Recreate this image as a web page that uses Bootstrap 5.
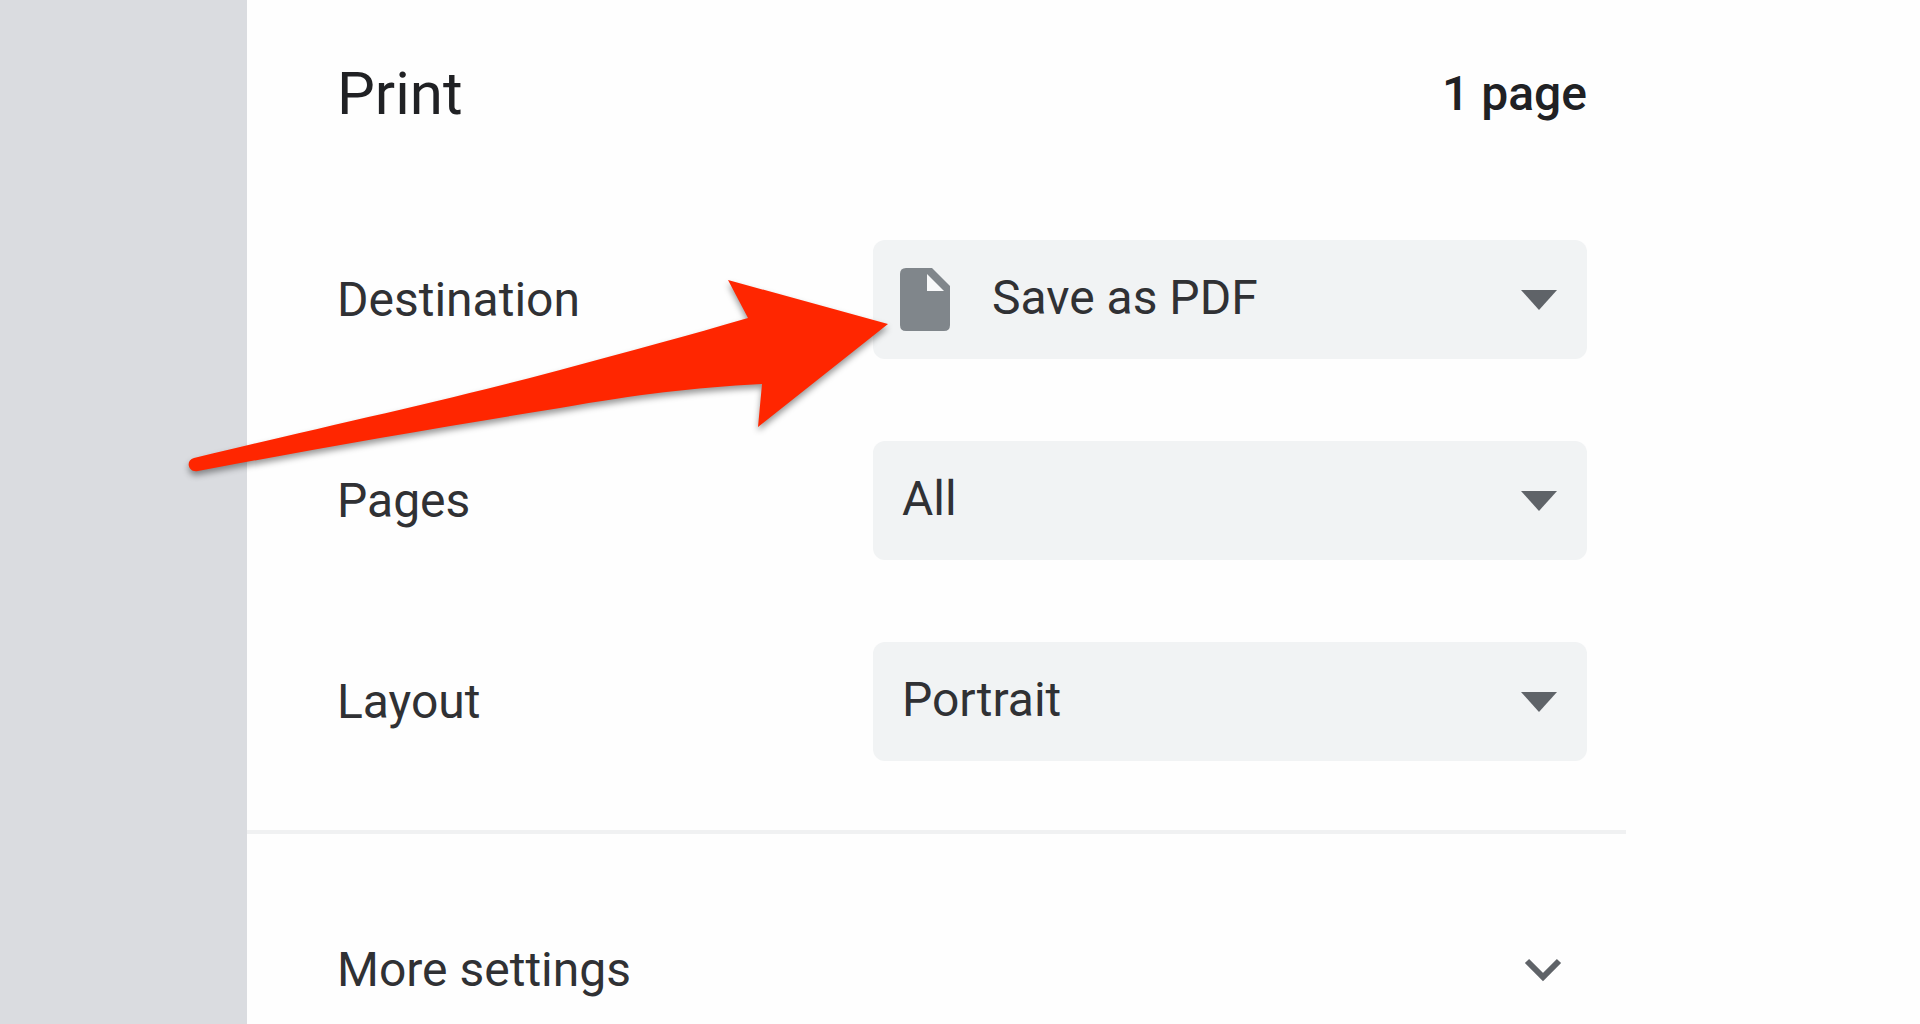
<!DOCTYPE html>
<html lang="en">
<head>
<meta charset="utf-8">
<meta name="viewport" content="width=device-width, initial-scale=1">
<title>Print</title>
<link href="https://cdn.jsdelivr.net/npm/bootstrap@5.3.0/dist/css/bootstrap.min.css" rel="stylesheet">
<style>
  body { font-family: Roboto, "Liberation Sans", sans-serif; font-size: 48px; line-height: 56px; color: #202124; background: #fefefe; }
  .preview-strip { width: 247px; background: #dadce0; }
  .print-panel { margin-right: 294px; }
  .panel-body { padding: 64px 39px 69px 90px; }
  .panel-title { font-size: 60px; line-height: 60px; }
  .sheet-count { line-height: 60px; }
  .settings { padding-top: 116px; gap: 82px; }
  .setting-label { width: 536px; color: #303134; }
  .setting-select {
    height: 119px; padding: 0 100px 3px 29px; border: 0; border-radius: 12px;
    font-size: 48px; line-height: 56px; color: #303134; background-color: #f1f3f4;
    background-image: url("data:image/svg+xml,%3Csvg xmlns='http://www.w3.org/2000/svg' viewBox='0 0 36 20'%3E%3Cpath fill='%235f6368' d='M0 0h36L18 20z'/%3E%3C/svg%3E");
    background-size: 36px 20px; background-position: right 30px center;
  }
  .setting-select.with-icon { padding-left: 119px; }
  .file-icon { left: 27px; top: 28px; width: 50px; height: 63px; }
  .panel-rule { height: 4px; background: #f0f1f2; }
  .more-toggle { padding: 108px 64px 0 90px; color: #303134; }
  .pointer-arrow { left: 180px; top: 270px; width: 720px; height: 220px; filter: drop-shadow(0 4px 3px rgba(0,0,0,.4)); }
</style>
<script src="https://cdn.jsdelivr.net/npm/bootstrap@5.3.0/dist/js/bootstrap.bundle.min.js"></script>
</head>
<body>
<div class="d-flex min-vh-100 position-relative">
  <aside class="preview-strip flex-shrink-0" aria-label="Preview"></aside>
  <main class="print-panel flex-grow-1">
    <div class="panel-body">
      <header class="d-flex justify-content-between align-items-center">
        <h1 class="panel-title fw-normal m-0">Print</h1>
        <span class="sheet-count fw-medium">1 page</span>
      </header>
      <form class="settings d-flex flex-column">
        <div class="d-flex align-items-center">
          <label class="setting-label flex-shrink-0" for="destination">Destination</label>
          <div class="position-relative flex-grow-1">
            <select class="form-select setting-select with-icon" id="destination"><option>Save as PDF</option></select>
            <svg class="file-icon position-absolute pe-none" viewBox="0 0 50 63" aria-hidden="true">
              <path fill="#80868b" d="M6 0H32L50 18V57Q50 63 44 63H6Q0 63 0 57V6Q0 0 6 0Z"/>
              <path fill="#f8f9fa" d="M27 6V23H44Z"/>
            </svg>
          </div>
        </div>
        <div class="d-flex align-items-center">
          <label class="setting-label flex-shrink-0" for="pages">Pages</label>
          <select class="form-select setting-select" id="pages"><option>All</option></select>
        </div>
        <div class="d-flex align-items-center">
          <label class="setting-label flex-shrink-0" for="layout">Layout</label>
          <select class="form-select setting-select" id="layout"><option>Portrait</option></select>
        </div>
      </form>
    </div>
    <div class="panel-rule"></div>
    <button type="button" class="more-toggle w-100 border-0 bg-transparent d-flex justify-content-between align-items-center text-start">
      More settings
      <svg width="38" height="24" viewBox="0 0 38 24" aria-hidden="true"><path d="M3 3L19 19L35 3" fill="none" stroke="#5f6368" stroke-width="6"/></svg>
    </button>
  </main>
  <svg class="pointer-arrow position-absolute pe-none" viewBox="180 270 720 220" aria-hidden="true">
    <path fill="#ff2600" d="M194 458C330 425 440 402 560 370C630 351 690 335 748 318L728 280L888 324L758 427L762 384C690 388 640 394 560 408C430 429 320 448 198 471C188 473 185 460 194 458Z"/>
  </svg>
</div>
</body>
</html>
